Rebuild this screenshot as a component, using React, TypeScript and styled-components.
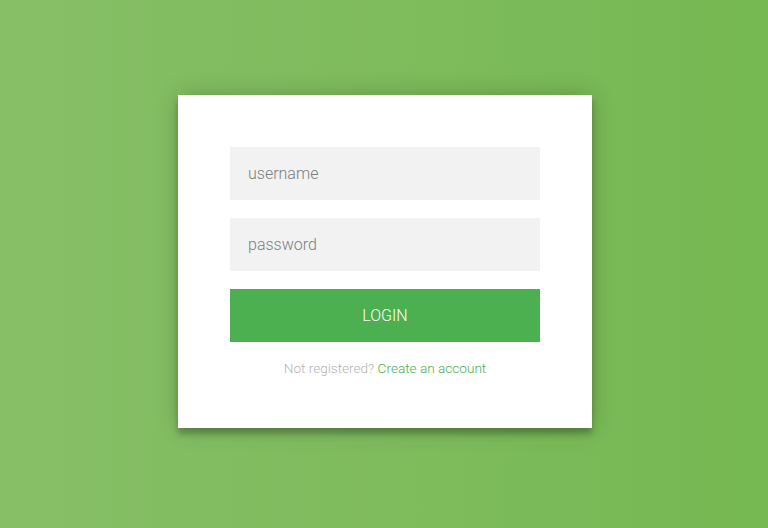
import React from 'react';
import styled, { createGlobalStyle } from 'styled-components';

const GlobalStyle = createGlobalStyle`
  html, body {
    margin: 0;
    padding: 0;
  }
  body {
    font-family: "Roboto", "Liberation Sans", sans-serif;
    -webkit-font-smoothing: antialiased;
  }
`;

const Page = styled.div`
  min-height: 100vh;
  box-sizing: border-box;
  padding: 95px 0 0 2px;
  display: flex;
  flex-direction: column;
  align-items: center;
  background: linear-gradient(to left, #76b852, #87bf67);
`;

const Form = styled.form`
  width: 414px;
  box-sizing: border-box;
  padding: 52px;
  background: #ffffff;
  text-align: center;
  display: flex;
  flex-direction: column;
  gap: 18px;
  box-shadow: 0 0 23px 0 rgba(0, 0, 0, 0.2), 0 6px 6px 0 rgba(0, 0, 0, 0.24);
`;

const Field = styled.input`
  width: 100%;
  height: 53px;
  box-sizing: border-box;
  margin: 0;
  padding: 0 18px;
  border: 0;
  outline: 0;
  background: #f2f2f2;
  font-family: inherit;
  font-weight: 300;
  font-size: 16px;
  color: #333;

  &::placeholder {
    color: #7d7d7d;
  }
`;

const Button = styled.button`
  width: 100%;
  height: 53px;
  margin: 0;
  border: 0;
  outline: 0;
  background: #4caf50;
  color: #ffffff;
  font-family: inherit;
  font-weight: 300;
  font-size: 16px;
  text-transform: uppercase;
  cursor: pointer;
`;

const Message = styled.p`
  margin: 0;
  color: #b3b3b3;
  font-size: 13.6px;
  font-weight: 300;
  line-height: 16px;
`;

const Link = styled.a`
  color: #4caf50;
  text-decoration: none;
`;

export default function App() {
  return (
    <Page>
      <GlobalStyle />
      <Form onSubmit={(e) => e.preventDefault()}>
        <Field type="text" placeholder="username" />
        <Field type="password" placeholder="password" />
        <Button type="submit">login</Button>
        <Message>
          Not registered? <Link href="#">Create an account</Link>
        </Message>
      </Form>
    </Page>
  );
}
